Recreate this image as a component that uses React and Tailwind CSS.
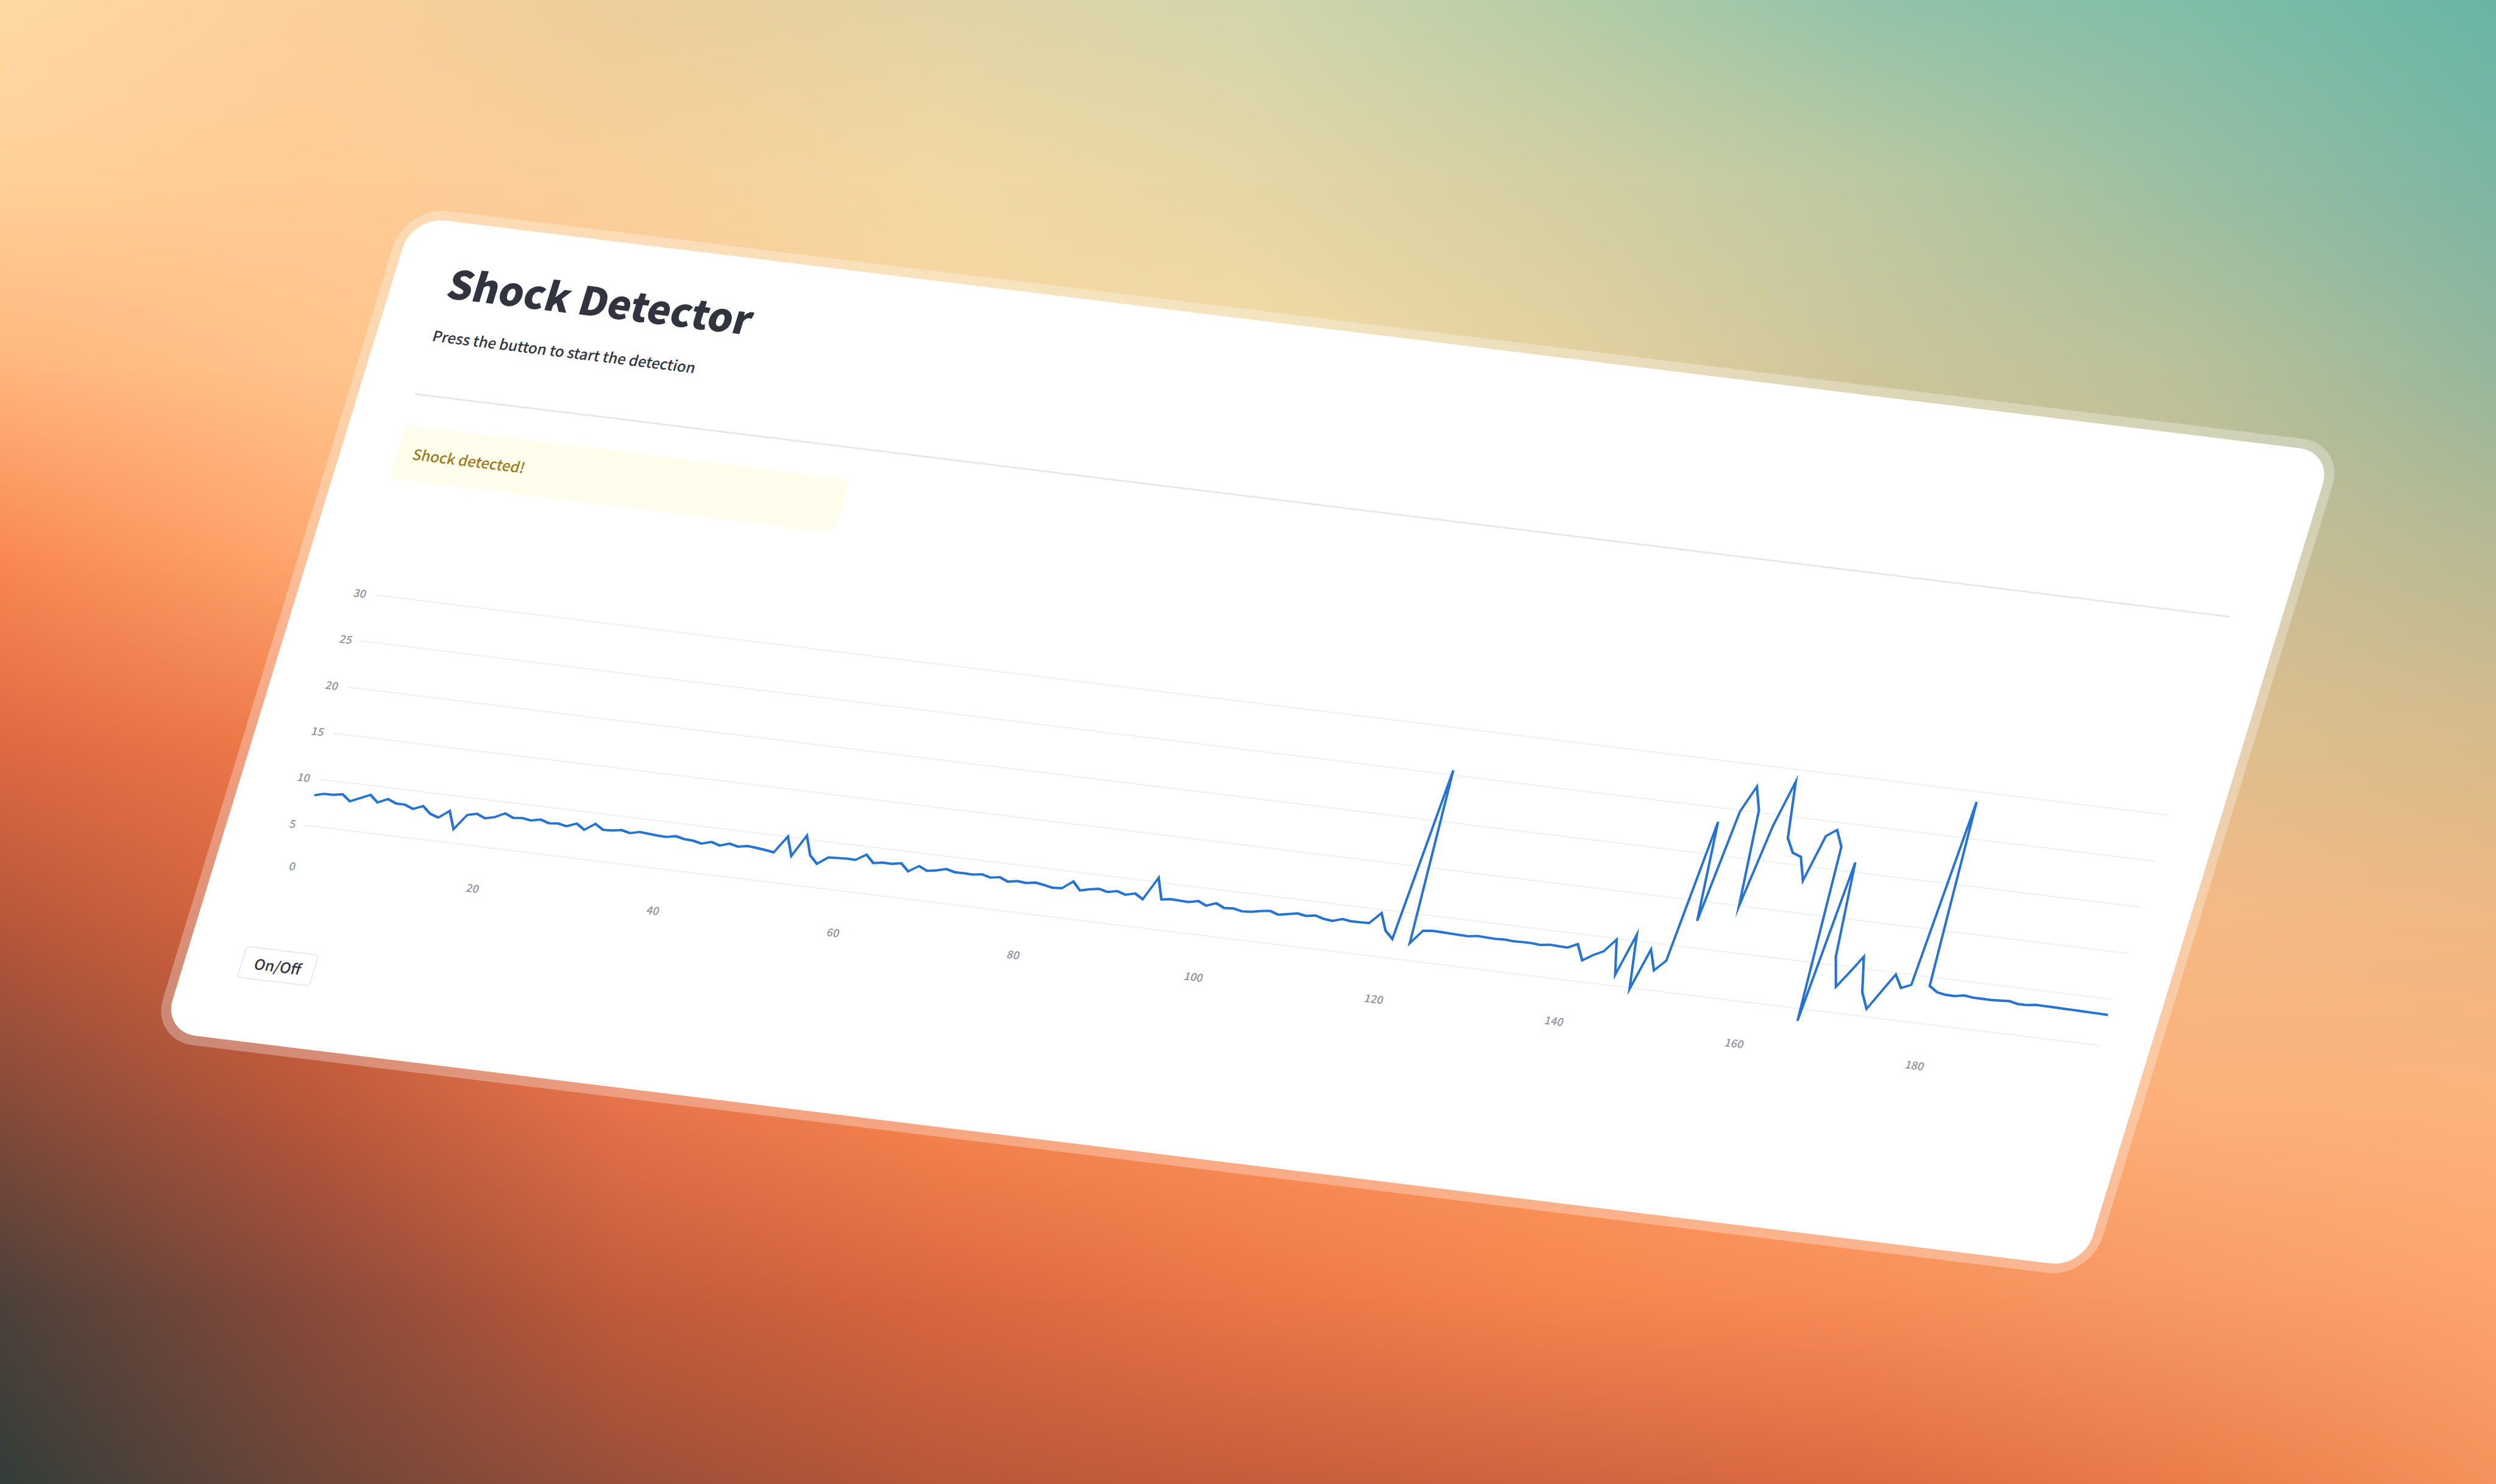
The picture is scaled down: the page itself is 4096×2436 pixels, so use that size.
const FONT = "font-['Noto_Sans_CJK_SC','Noto_Sans',sans-serif]";

// Colour mesh behind the card: each row is a left-to-right gradient, rows cross-fade downwards.
const MESH = [
  ['#ffd9a3', '#fcd09b', '#ecce9c', '#e2d3a5', '#d3d6ac', '#b5cda8', '#93c3a9', '#80bea8', '#69b5a6'],
  ['#ffd098', '#ffcb94', '#f9cf9a', '#f2d8a4', '#e6d6a6', '#d4cfa2', '#bcc9a2', '#9bbfa2', '#7cb6a3'],
  ['#ffb57b', '#ffc38a', '#fecb94', '#fad5a0', '#f4dba6', '#e5d1a0', '#cdc59a', '#bac19a', '#96b79c'],
  ['#f98854', '#ffa86f', '#ffc287', '#ffcb92', '#fcd29b', '#f0d09c', '#e0c796', '#cdbf95', '#b9ba93'],
  ['#df6a42', '#f07c4c', '#ffa76e', '#ffb87f', '#ffc58c', '#fac894', '#eec592', '#dfbf8f', '#d8bb8c'],
  ['#b5563b', '#db683f', '#f98a56', '#ff9f66', '#ffae75', '#ffb87e', '#fcbc85', '#f6b984', '#f0b883'],
  ['#824a39', '#b9573b', '#e5724a', '#f6854f', '#fc9159', '#fe9b62', '#fea76e', '#fcb079', '#fcb37b'],
  ['#4d413a', '#8a4a3a', '#c25b3b', '#d9673f', '#ea7747', '#f5854f', '#f88d59', '#f79a64', '#fca46c'],
  ['#333d39', '#6e4639', '#9a4f39', '#b8573a', '#c65c3b', '#cf6440', '#dc6b40', '#ea7c4a', '#f5915c'],
];

const SAMPLES = [
  8.26, 8.53, 8.54, 8.72, 8.08, 8.54, 9.02, 8.31, 8.81, 8.45, 8.44, 8.1, 8.53, 7.81, 7.52, 8.36, 6.49, 8.16, 8.41, 8.04,
  8.28, 8.82, 8.45, 8.54, 8.4, 8.62, 8.34, 8.43, 8.26, 8.67, 8.11, 8.88, 8.35, 8.4, 8.56, 8.35, 8.6, 8.52, 8.45, 8.41,
  8.62, 8.42, 8.37, 8.17, 8.48, 8.21, 8.53, 8.32, 8.51, 8.43, 8.32, 8.18, 10.03, 8.03, 10.37, 8.34, 7.54, 8.35, 8.41, 8.47,
  8.46, 9.14, 8.35, 8.51, 8.5, 8.69, 7.92, 8.62, 8.22, 8.39, 8.66, 8.43, 8.44, 8.41, 8.57, 8.32, 8.49, 8.13, 8.31, 8.22,
  8.38, 8.24, 8.06, 8.13, 8.99, 8.13, 8.38, 8.55, 8.32, 8.55, 8.26, 8.53, 8.02, 10.47, 8.24, 8.38, 8.35, 8.31, 8.54, 8.16,
  8.54, 8.14, 8.22, 8.03, 8.09, 8.3, 8.44, 8.14, 8.33, 8.52, 8.37, 8.54, 8.29, 8.19, 8.51, 8.39, 8.4, 8.43, 9.64, 7.85,
  7.07, 25.5, 6.84, 8.33, 8.43, 8.41, 8.38, 8.35, 8.32, 8.48, 8.43, 8.4, 8.45, 8.38, 8.41, 8.42, 8.34, 8.49, 8.45, 8.42,
  8.91, 7.27, 7.96, 8.49, 9.89, 6.18, 10.66, 4.88, 9.29, 7.14, 8.31, 23.51, 12.88, 24.88, 27.7, 25.23, 14.95, 23.75, 28.72, 22.7,
  21.24, 20.91, 18.44, 23.41, 24.19, 22.48, 3.71, 21.02, 10.91, 7.75, 9.47, 11.27, 7.53, 5.85, 7.83, 9.82, 8.47, 8.94, 28.92, 9.06,
  8.49, 8.33, 8.32, 8.5, 8.39, 8.38, 8.37, 8.42, 8.49, 8.3, 8.3, 8.44, 8.42, 8.41, 8.39, 8.38, 8.36, 8.34, 8.33, 8.31,
];

const PLOT_LEFT = 35;
const PLOT_RIGHT = 2999;
const xAt = (i) => PLOT_LEFT + (i * (PLOT_RIGHT - PLOT_LEFT)) / (SAMPLES.length - 1);
const yAt = (value) => 24 + ((30 - value) * 389) / 25;

function Backdrop() {
  return (
    <div aria-hidden="true" className="absolute inset-0">
      {MESH.map((colors, row) => {
        const step = 100 / (MESH.length - 1);
        const mask =
          row === 0
            ? undefined
            : `linear-gradient(to bottom, transparent ${(row - 1) * step}%, black ${row * step}%)`;
        return (
          <div
            key={row}
            className="absolute inset-0"
            style={{ backgroundImage: `linear-gradient(to right, ${colors.join(', ')})`, maskImage: mask }}
          />
        );
      })}
    </div>
  );
}

function ShockChart() {
  const points = SAMPLES.map((v, i) => `${xAt(i).toFixed(1)},${yAt(v).toFixed(1)}`).join(' ');
  return (
    <svg viewBox="0 0 3000 500" role="img" aria-label="Shock readings" className="block h-auto w-full overflow-visible font-medium">
      {[30, 25, 20, 15, 10, 5].map((tick) => (
        <g key={tick}>
          <line x1={PLOT_LEFT} x2={PLOT_RIGHT} y1={yAt(tick)} y2={yAt(tick)} stroke="#eeeff5" strokeWidth="2" />
          <text x="20" y={yAt(tick) + 7} textAnchor="end" fontSize="18" fill="#8e909c">
            {tick}
          </text>
        </g>
      ))}
      {[0, 20, 40, 60, 80, 100, 120, 140, 160, 180].map((tick) => (
        <text key={tick} x={xAt(tick)} y="489" textAnchor="middle" fontSize="18" fill="#8e909c">
          {tick}
        </text>
      ))}
      <polyline points={points} fill="none" stroke="#2673d3" strokeWidth="4" strokeMiterlimit="10" />
    </svg>
  );
}

export default function App() {
  return (
    <div className={`relative flex min-h-screen items-center justify-center overflow-hidden ${FONT}`}>
      <Backdrop />
      <div className="relative w-[78.3%] rotate-[7deg] -skew-x-10 rounded-[70px] bg-white/30 p-4">
        <main className="rounded-[54px] bg-white pt-[54px] pr-[83px] pb-[103px] pl-[91px] text-[#31333f]">
          <h1 className="text-[65px] leading-[88px] font-black">Shock Detector</h1>
          <p className="mt-[27px] text-[24px] leading-[40px] font-medium">Press the button to start the detection</p>
          <hr className="mt-[78px] border-t-[3px] border-[#e8e8ea]" />
          <div className="mt-[51px] grid grid-cols-4 gap-5">
            <div
              role="alert"
              className="flex h-[90px] items-center rounded-md bg-[#fffdeb] px-[26px] text-[24px] font-medium text-[#9c7a20]"
            >
              Shock detected!
            </div>
          </div>
          <div className="mt-[169px]">
            <ShockChart />
          </div>
          <button
            type="button"
            className="mt-[121px] block h-[54px] rounded-md border-2 border-[#e9e9ed] bg-white px-5 text-[24px] leading-none font-medium"
          >
            On/Off
          </button>
        </main>
      </div>
    </div>
  );
}
